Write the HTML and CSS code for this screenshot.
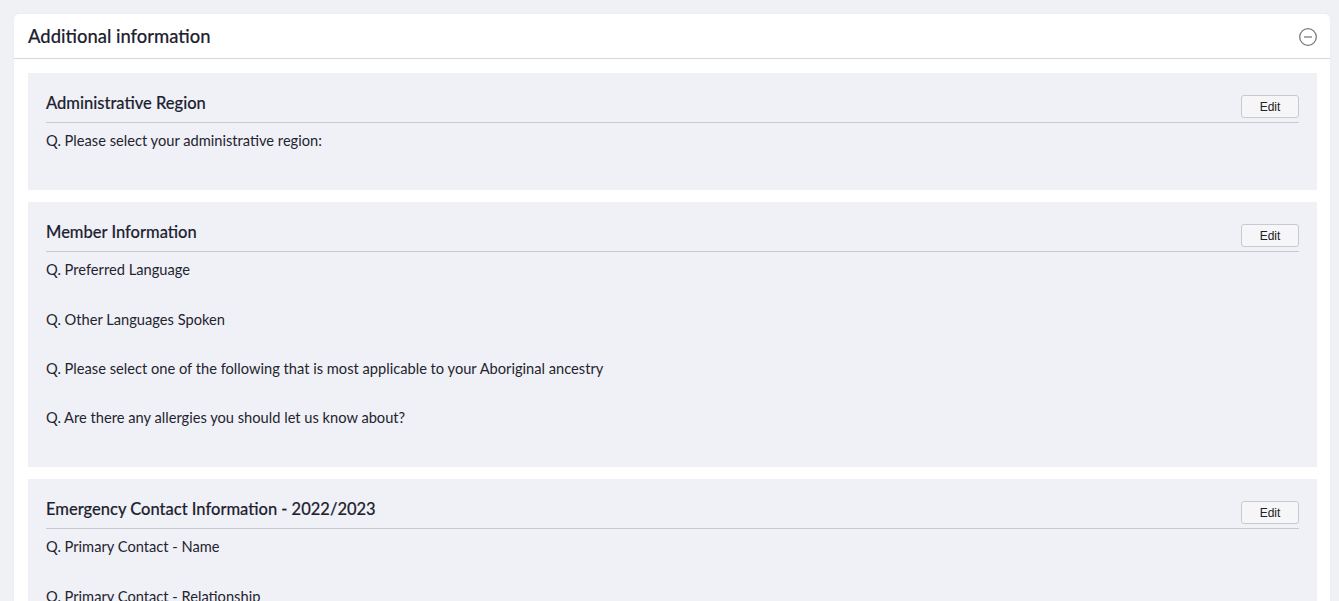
FILE: index.html
```html
<!DOCTYPE html>
<html lang="en">
<head>
<meta charset="utf-8">
<title>Additional information</title>
<link rel="stylesheet" href="styles.css">
</head>
<body>
<div class="page">
  <div class="card">
    <div class="card-header">
      <h2 class="card-title">Additional information</h2>
      <button class="collapse-btn" aria-label="Collapse">
        <svg width="20" height="20" viewBox="0 0 20 20"><circle cx="10" cy="10" r="8.3" fill="none" stroke="#7a7a7e" stroke-width="1.3"/><line x1="6" y1="10" x2="14" y2="10" stroke="#7a7a7e" stroke-width="1.3"/></svg>
      </button>
    </div>
    <div class="card-body">
      <section class="section">
        <div class="section-head">
          <h3 class="section-title">Administrative Region</h3>
          <button class="edit-btn">Edit</button>
        </div>
        <div class="qa"><div class="q">Q. Please select your administrative region:</div><div class="a"></div></div>
      </section>
      <section class="section">
        <div class="section-head">
          <h3 class="section-title">Member Information</h3>
          <button class="edit-btn">Edit</button>
        </div>
        <div class="qa"><div class="q">Q. Preferred Language</div><div class="a"></div></div>
        <div class="qa"><div class="q">Q. Other Languages Spoken</div><div class="a"></div></div>
        <div class="qa"><div class="q">Q. Please select one of the following that is most applicable to your Aboriginal ancestry</div><div class="a"></div></div>
        <div class="qa"><div class="q">Q. Are there any allergies you should let us know about?</div><div class="a"></div></div>
      </section>
      <section class="section">
        <div class="section-head">
          <h3 class="section-title">Emergency Contact Information - 2022/2023</h3>
          <button class="edit-btn">Edit</button>
        </div>
        <div class="qa"><div class="q">Q. Primary Contact - Name</div><div class="a"></div></div>
        <div class="qa"><div class="q">Q. Primary Contact - Relationship</div><div class="a"></div></div>
      </section>
    </div>
  </div>
</div>
</body>
</html>
```

FILE: styles.css
```css
* { box-sizing: border-box; }
html, body { margin: 0; padding: 0; }
body {
  background: #f0f1f5;
  font-family: "Lato", "Noto Sans", sans-serif;
  color: #1f2430;
  height: 601px;
  overflow: hidden;
}
.page {
  padding: 14px 9px 0 14px;
}
.card {
  background: #ffffff;
  border-radius: 5px;
  box-shadow: 0 0 2px rgba(0,0,0,0.06);
}
.card-header {
  height: 45px;
  padding: 0 12px 0 14px;
  display: flex;
  align-items: center;
  justify-content: space-between;
  border-bottom: 1px solid #d6d7db;
}
.card-title {
  margin: 0;
  font-size: 18.4px;
  font-weight: 500;
  color: #1d2230;
  -webkit-text-stroke: 0.15px #1d2230;
}
.collapse-btn {
  border: 0;
  background: transparent;
  padding: 0;
  width: 20px;
  height: 20px;
  display: flex;
  margin-top: 2px;
}
.card-body {
  padding: 14px 13px 14px 14px;
  display: flex;
  flex-direction: column;
  gap: 12px;
}
.section {
  background: #f0f1f6;
  padding: 19px 18px 18px;
}
.section-head {
  display: flex;
  align-items: flex-end;
  justify-content: space-between;
  padding-bottom: 4px;
  border-bottom: 1px solid #c9cacf;
}
.section-title {
  margin: 0 0 4px;
  font-size: 16.5px;
  line-height: 22px;
  font-weight: 500;
  color: #1d2230;
  -webkit-text-stroke: 0.15px #1d2230;
}
.edit-btn {
  width: 58px;
  height: 23px;
  border: 1px solid #c9cacf;
  border-radius: 3px;
  background: #f6f6f8;
  font-family: "Liberation Sans", Arial, sans-serif;
  font-size: 12px;
  color: #222;
  padding: 0;
}
.qa {
  padding-top: 8px;
}
.q {
  font-size: 14.66px;
  line-height: 20px;
  color: #1f2430;
}
.a {
  min-height: 21.3px;
}
```
